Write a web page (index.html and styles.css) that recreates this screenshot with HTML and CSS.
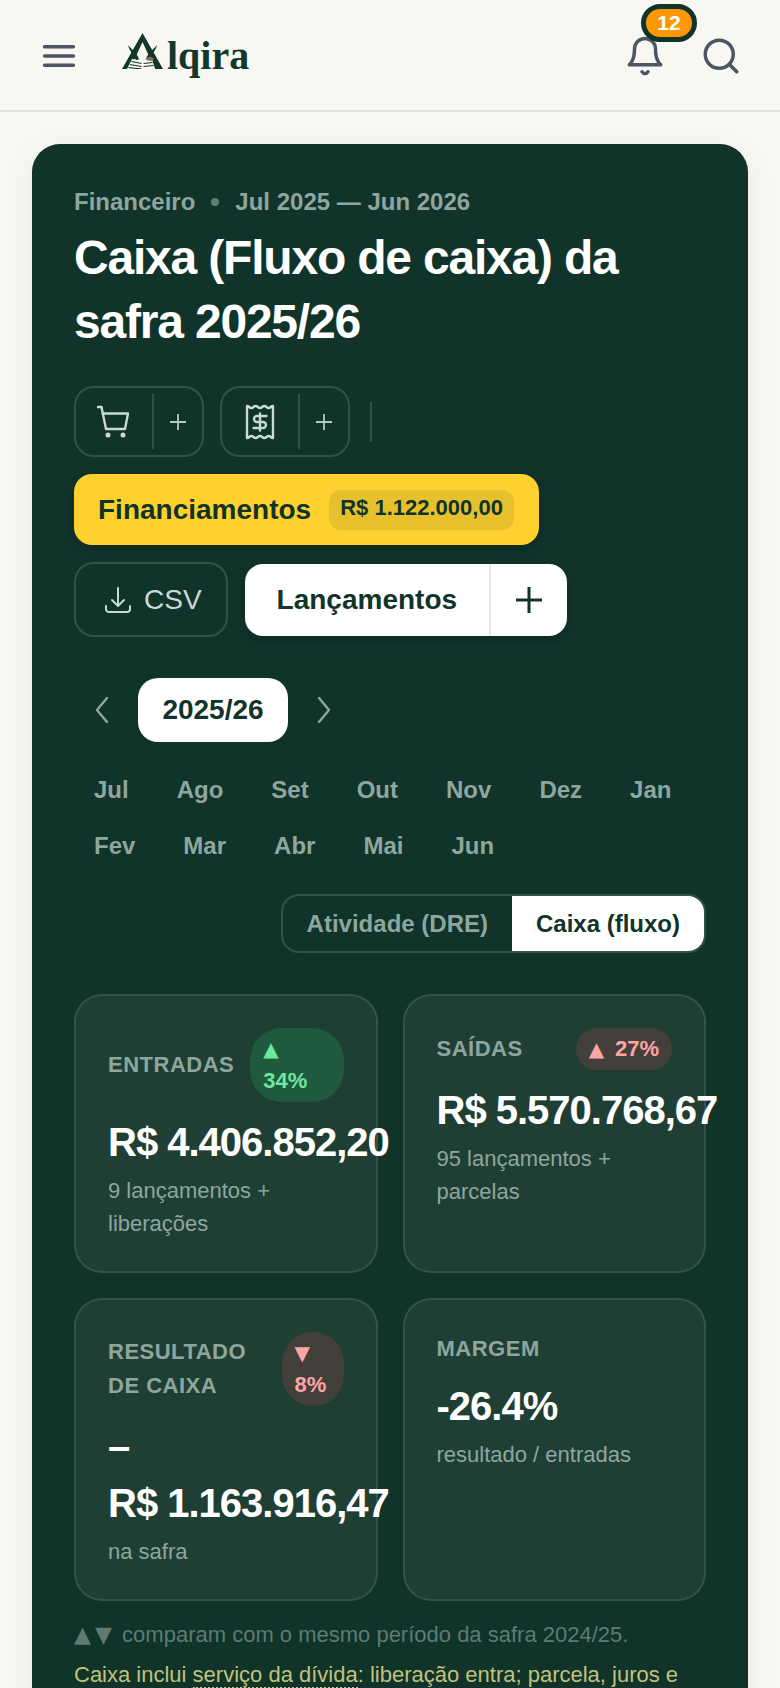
FILE: index.html
```html
<!DOCTYPE html>
<html lang="pt-BR">
<head>
  <meta charset="UTF-8" />
  <meta name="viewport" content="width=device-width, initial-scale=1.0"/>
  <title>Alqira - Caixa da safra</title>
  <link rel="stylesheet" href="styles.css">
</head>
<body>
  <div class="header">
    <div class="header-left">
      <button class="icon-button" aria-label="Menu">
        <svg viewBox="0 0 24 24" class="header-icon"><path d="M3.75 6.75h16.5M3.75 12h16.5m-16.5 5.25h16.5"/></svg>
      </button>
      <div class="logo" aria-label="Alqira">
        <svg class="logo-mark" viewBox="0 0 41 36">
          <path class="mark-dark" d="M20.500 0 41 36h-8L20.500 9 8 36H0Z"/>
          <path class="mark-dark" d="M6 12c4 5 8 6 11 14l-3 2C12 21 7 18 6 12Z"/>
          <path class="mark-dark" d="M35 12c-4 5-8 6-11 14l3 2c2-7 7-10 8-16Z"/>
          <path class="mark-page" d="M10 26l10 2v8H5Z"/>
          <path class="mark-page" d="M21 28l9-2 3 10H21Z"/>
          <path class="mark-line" d="M9.500 28.500l10 2M8 31.500l11.500 2M6.500 34.500l13 1.500M21.500 30.500l9-1M21.500 33.500l10-1"/>
          <path class="mark-brown" d="M23 26l5-2.500 4 2-2 2.500-4-.5Z"/>
        </svg>
        <span class="logo-text">lqira</span>
      </div>
    </div>
    <div class="header-right">
      <button class="icon-button bell" aria-label="Notificações">
        <svg viewBox="0 0 24 24" class="header-icon"><path d="M6 8a6 6 0 0 1 12 0c0 7 3 9 3 9H3s3-2 3-9"/><path d="M10.300 21a1.940 1.940 0 0 0 3.400 0"/></svg>
        <span class="badge">12</span>
      </button>
      <button class="icon-button" aria-label="Buscar">
        <svg viewBox="0 0 24 24" class="header-icon"><circle cx="11" cy="11" r="8"/><path d="m21 21-4.300-4.300"/></svg>
      </button>
    </div>
  </div>

  <div class="content">
    <div class="panel">
      <div class="eyebrow">
        <span>Financeiro</span>
        <span class="dot"></span>
        <span>Jul 2025 — Jun 2026</span>
      </div>
      <h1 class="title">Caixa (Fluxo de caixa) da safra 2025/26</h1>

      <div class="toolbar">
        <div class="tool-group">
          <button class="tool-main" aria-label="Compras">
            <svg viewBox="0 0 36 36" class="tool-icon">
              <path d="M2 3h3.500L10 25h19l3-15.500H6.500"/>
              <circle class="solid" cx="12" cy="31" r="2.500"/>
              <circle class="solid" cx="27" cy="31" r="2.500"/>
            </svg>
          </button>
          <button class="tool-plus" aria-label="Nova compra">
            <svg viewBox="0 0 18 18" class="plus-icon"><path d="M9 1v16M1 9h16"/></svg>
          </button>
        </div>
        <div class="tool-group">
          <button class="tool-main" aria-label="Despesas">
            <svg viewBox="0 0 36 36" class="tool-icon">
              <path d="M5 2c2.170 0 2.170 2 4.330 2s2.170-2 4.340-2 2.160 2 4.330 2 2.170-2 4.330-2 2.170 2 4.340 2S28.830 2 31 2v32c-2.170 0-2.170-2-4.330-2s-2.170 2-4.340 2-2.160-2-4.330-2-2.170 2-4.330 2-2.170-2-4.340-2S7.170 34 5 34Z"/>
              <path d="M24.500 12H15a3 3 0 0 0 0 6h6a3 3 0 0 1 0 6h-9.500M18 9.500v17"/>
            </svg>
          </button>
          <button class="tool-plus" aria-label="Nova despesa">
            <svg viewBox="0 0 18 18" class="plus-icon"><path d="M9 1v16M1 9h16"/></svg>
          </button>
        </div>
        <div class="tool-divider"></div>

        <button class="finance-button">
          Financiamentos
          <span class="finance-amount">R$ 1.122.000,00</span>
        </button>

        <button class="csv-button">
          <svg viewBox="0 0 24 24" class="csv-icon"><path d="M3 16.500v2.250A2.250 2.250 0 0 0 5.250 21h13.500A2.250 2.250 0 0 0 21 18.750V16.500M16.500 12 12 16.500m0 0L7.500 12m4.500 4.500V3"/></svg>
          CSV
        </button>

        <div class="entries-button">
          <button class="entries-main">Lançamentos</button>
          <button class="entries-plus" aria-label="Novo lançamento">
            <svg viewBox="0 0 26 26" class="entries-icon"><path d="M13 0v26M0 13h26"/></svg>
          </button>
        </div>
      </div>

      <div class="year-row">
        <button class="year-arrow" aria-label="Safra anterior">
          <svg viewBox="0 0 16 26"><path d="M13 1 3 13l10 12"/></svg>
        </button>
        <button class="year-current">2025/26</button>
        <button class="year-arrow" aria-label="Próxima safra">
          <svg viewBox="0 0 16 26"><path d="m3 1 10 12L3 25"/></svg>
        </button>
      </div>

      <div class="months">
        <button class="month">Jul</button>
        <button class="month">Ago</button>
        <button class="month">Set</button>
        <button class="month">Out</button>
        <button class="month">Nov</button>
        <button class="month">Dez</button>
        <button class="month">Jan</button>
        <button class="month">Fev</button>
        <button class="month">Mar</button>
        <button class="month">Abr</button>
        <button class="month">Mai</button>
        <button class="month">Jun</button>
      </div>

      <div class="view-row">
        <div class="view-toggle">
          <button class="view-option">Atividade (DRE)</button>
          <button class="view-option active">Caixa (fluxo)</button>
        </div>
      </div>

      <div class="kpis">
        <div class="kpi">
          <div class="kpi-head">
            <div class="kpi-label">ENTRADAS</div>
            <div class="trend up"><span class="tri">▲</span> 34%</div>
          </div>
          <div class="kpi-value">R$&nbsp;4.406.852,20</div>
          <div class="kpi-sub">9 lançamentos + liberações</div>
        </div>
        <div class="kpi">
          <div class="kpi-head">
            <div class="kpi-label">SAÍDAS</div>
            <div class="trend down"><span class="tri">▲</span> 27%</div>
          </div>
          <div class="kpi-value">R$&nbsp;5.570.768,67</div>
          <div class="kpi-sub">95 lançamentos + parcelas</div>
        </div>
        <div class="kpi">
          <div class="kpi-head">
            <div class="kpi-label">RESULTADO DE CAIXA</div>
            <div class="trend down"><span class="tri">▼</span> 8%</div>
          </div>
          <div class="kpi-value">– R$&nbsp;1.163.916,47</div>
          <div class="kpi-sub">na safra</div>
        </div>
        <div class="kpi">
          <div class="kpi-head">
            <div class="kpi-label">MARGEM</div>
          </div>
          <div class="kpi-value">-26.4%</div>
          <div class="kpi-sub">resultado / entradas</div>
        </div>
      </div>

      <p class="note"><span class="tri note-tri">▲</span><span class="tri note-tri">▼</span> comparam com o mesmo período da safra 2024/25.</p>
      <p class="note-warn">Caixa inclui <span class="term">serviço da dívida</span>: liberação entra; parcela, juros e</p>
    </div>
  </div>
</body>
</html>
```

FILE: styles.css
```css
:root {
  --page-bg: #f9f7f2;
  --panel-bg: #10332a;
  --card-bg: #1f3f35;
  --line: rgba(255, 255, 255, 0.15);
  --muted: #8ea69e;
  --soft: #c8dad4;
}

* {
  box-sizing: border-box;
  margin: 0;
  padding: 0;
  font-family: "Liberation Sans", Arial, sans-serif;
}

html, body {
  height: 100%;
  overflow: hidden;
}

body {
  background: var(--page-bg);
}

button {
  background: none;
  border: none;
  cursor: pointer;
}

svg {
  display: block;
  fill: none;
}

/* Header */
.header {
  height: 112px;
  display: flex;
  justify-content: space-between;
  align-items: center;
  padding: 2px 38px 0 38px;
  border-bottom: 2px solid #e4e2dc;
}

.header-left {
  display: flex;
  align-items: center;
  gap: 42px;
}

.header-right {
  display: flex;
  align-items: center;
  gap: 34px;
}

.icon-button {
  position: relative;
  width: 42px;
  height: 42px;
}

.header-icon {
  width: 42px;
  height: 42px;
  stroke: #4b5563;
  stroke-width: 2;
  stroke-linecap: round;
  stroke-linejoin: round;
}

.badge {
  position: absolute;
  top: -31px;
  left: 17px;
  width: 56px;
  height: 38px;
  border: 5px solid var(--panel-bg);
  border-radius: 19px;
  background: #ff9800;
  color: #fff;
  font-size: 21px;
  font-weight: bold;
  line-height: 28px;
  text-align: center;
}

.logo {
  display: flex;
  align-items: flex-start;
  height: 46px;
}

.logo-mark {
  width: 41px;
  height: 36px;
}

.mark-dark {
  fill: #12372d;
}

.mark-page {
  fill: var(--page-bg);
}

.mark-line {
  stroke: #12372d;
  stroke-width: 1.200;
}

.mark-brown {
  fill: #8d7150;
}

.logo-text {
  margin-left: 4px;
  font-family: "Liberation Serif", serif;
  font-size: 40px;
  font-weight: bold;
  line-height: 46px;
  color: #12372d;
}

/* Main panel */
.content {
  padding: 32px 32px 0;
}

.panel {
  background: var(--panel-bg);
  border-radius: 28px;
  padding: 40px 42px 60px;
  box-shadow: 0 8px 30px rgba(0, 0, 0, 0.06);
}

.eyebrow {
  display: flex;
  align-items: center;
  gap: 16px;
  font-size: 24px;
  font-weight: bold;
  line-height: 36px;
  color: var(--muted);
}

.dot {
  width: 8px;
  height: 8px;
  border-radius: 50%;
  background: #5f7d73;
}

.title {
  margin-top: 6px;
  font-size: 48px;
  font-weight: bold;
  line-height: 64px;
  letter-spacing: -1.2px;
  color: #fff;
}

/* Toolbar */
.toolbar {
  display: flex;
  flex-wrap: wrap;
  align-items: center;
  gap: 17px 16px;
  margin-top: 32px;
}

.tool-group {
  display: flex;
  align-items: center;
  height: 71px;
  border: 2px solid var(--line);
  border-radius: 20px;
}

.tool-main {
  width: 78px;
  height: 55px;
  display: flex;
  justify-content: center;
  align-items: center;
  border-right: 2px solid var(--line);
}

.tool-plus {
  width: 48px;
  height: 55px;
  display: flex;
  justify-content: center;
  align-items: center;
}

.tool-icon {
  width: 36px;
  height: 36px;
  stroke: var(--soft);
  stroke-width: 2.400;
  stroke-linecap: round;
  stroke-linejoin: round;
}

.tool-icon .solid {
  fill: var(--soft);
  stroke: none;
}

.plus-icon {
  width: 18px;
  height: 18px;
  stroke: #b3c9c2;
  stroke-width: 1.800;
}

.tool-divider {
  width: 2px;
  height: 40px;
  margin-left: 4px;
  background: var(--line);
}

.finance-button {
  display: flex;
  align-items: center;
  gap: 18px;
  height: 71px;
  padding: 0 25px 0 24px;
  border-radius: 18px;
  background: #ffd12e;
  color: var(--panel-bg);
  font-size: 28px;
  font-weight: bold;
  box-shadow: 0 4px 12px rgba(0, 0, 0, 0.18);
}

.finance-amount {
  height: 40px;
  padding: 0 11px;
  border-radius: 12px;
  background: rgba(16, 51, 42, 0.1);
  font-size: 22px;
  line-height: 36px;
}

.csv-button {
  display: flex;
  align-items: center;
  gap: 10px;
  height: 75px;
  padding: 0 24px 0 26px;
  border: 2px solid var(--line);
  border-radius: 20px;
  color: var(--soft);
  font-size: 28px;
}

.csv-icon {
  width: 32px;
  height: 32px;
  stroke: var(--soft);
  stroke-width: 1.500;
  stroke-linecap: round;
  stroke-linejoin: round;
}

.entries-button {
  display: flex;
  height: 72px;
  margin-left: 1px;
  border-radius: 18px;
  background: #fff;
  box-shadow: 0 4px 12px rgba(0, 0, 0, 0.18);
}

.entries-main {
  padding: 0 32px;
  border-right: 2px solid #e5e7e6;
  color: var(--panel-bg);
  font-size: 28px;
  font-weight: bold;
}

.entries-plus {
  width: 76px;
  display: flex;
  justify-content: center;
  align-items: center;
}

.entries-icon {
  width: 26px;
  height: 26px;
  stroke: var(--panel-bg);
  stroke-width: 3;
}

/* Year and months */
.year-row {
  display: flex;
  align-items: center;
  gap: 8px;
  margin-top: 41px;
}

.year-arrow {
  width: 56px;
  height: 56px;
  display: flex;
  justify-content: center;
  align-items: center;
}

.year-arrow svg {
  width: 16px;
  height: 26px;
  stroke: var(--muted);
  stroke-width: 2.400;
  stroke-linecap: round;
  stroke-linejoin: round;
}

.year-current {
  width: 150px;
  height: 64px;
  border-radius: 20px;
  background: #fff;
  color: var(--panel-bg);
  font-size: 28px;
  font-weight: bold;
}

.months {
  display: flex;
  flex-wrap: wrap;
  gap: 8px;
  margin-top: 24px;
}

.month {
  height: 48px;
  padding: 0 20px;
  color: var(--muted);
  font-size: 24px;
  font-weight: bold;
}

.view-row {
  display: flex;
  justify-content: flex-end;
  margin-top: 24px;
}

.view-toggle {
  display: flex;
  height: 59px;
  border: 2px solid var(--line);
  border-radius: 18px;
  overflow: hidden;
}

.view-option {
  padding: 0 24px;
  color: var(--muted);
  font-size: 24px;
  font-weight: bold;
}

.view-option.active {
  background: #fff;
  color: var(--panel-bg);
}

/* KPI cards */
.kpis {
  display: grid;
  grid-template-columns: repeat(2, minmax(0, 1fr));
  gap: 25px;
  margin-top: 41px;
}

.kpi {
  min-width: 0;
  padding: 32px 32px 31px;
  background: var(--card-bg);
  border: 2px solid rgba(255, 255, 255, 0.1);
  border-radius: 28px;
}

.kpi-head {
  display: flex;
  justify-content: space-between;
  align-items: center;
  gap: 16px;
}

.kpi-label {
  font-size: 22px;
  font-weight: bold;
  line-height: 34px;
  letter-spacing: 0.5px;
  color: var(--muted);
}

.tri {
  display: inline-block;
  width: 20px;
  font-family: "DejaVu Sans", sans-serif;
  font-size: 20px;
  font-weight: normal;
  line-height: 1;
}

.note-tri {
  width: 21px;
  font-size: 22px;
}

.trend {
  padding: 5px 13px;
  border-radius: 32px;
  font-size: 22px;
  font-weight: bold;
  line-height: 32px;
}

.trend.up {
  background: #1f5a3f;
  color: #6ee7a0;
}

.trend.down {
  background: #433f3b;
  color: #fca5a5;
}

.kpi-value {
  margin-top: 12px;
  font-size: 40px;
  font-weight: bold;
  line-height: 57px;
  letter-spacing: -1px;
  color: #fff;
}

.kpi-sub {
  margin-top: 3px;
  font-size: 22px;
  line-height: 33px;
  color: var(--muted);
}

/* Footnotes */
.note {
  margin-top: 17px;
  font-size: 22px;
  line-height: 33px;
  color: #5f7b72;
}

.note-warn {
  margin-top: 7px;
  font-size: 22px;
  line-height: 33px;
  color: #c2c27a;
}

.term {
  border-bottom: 2px dotted #c2c27a;
}
```
